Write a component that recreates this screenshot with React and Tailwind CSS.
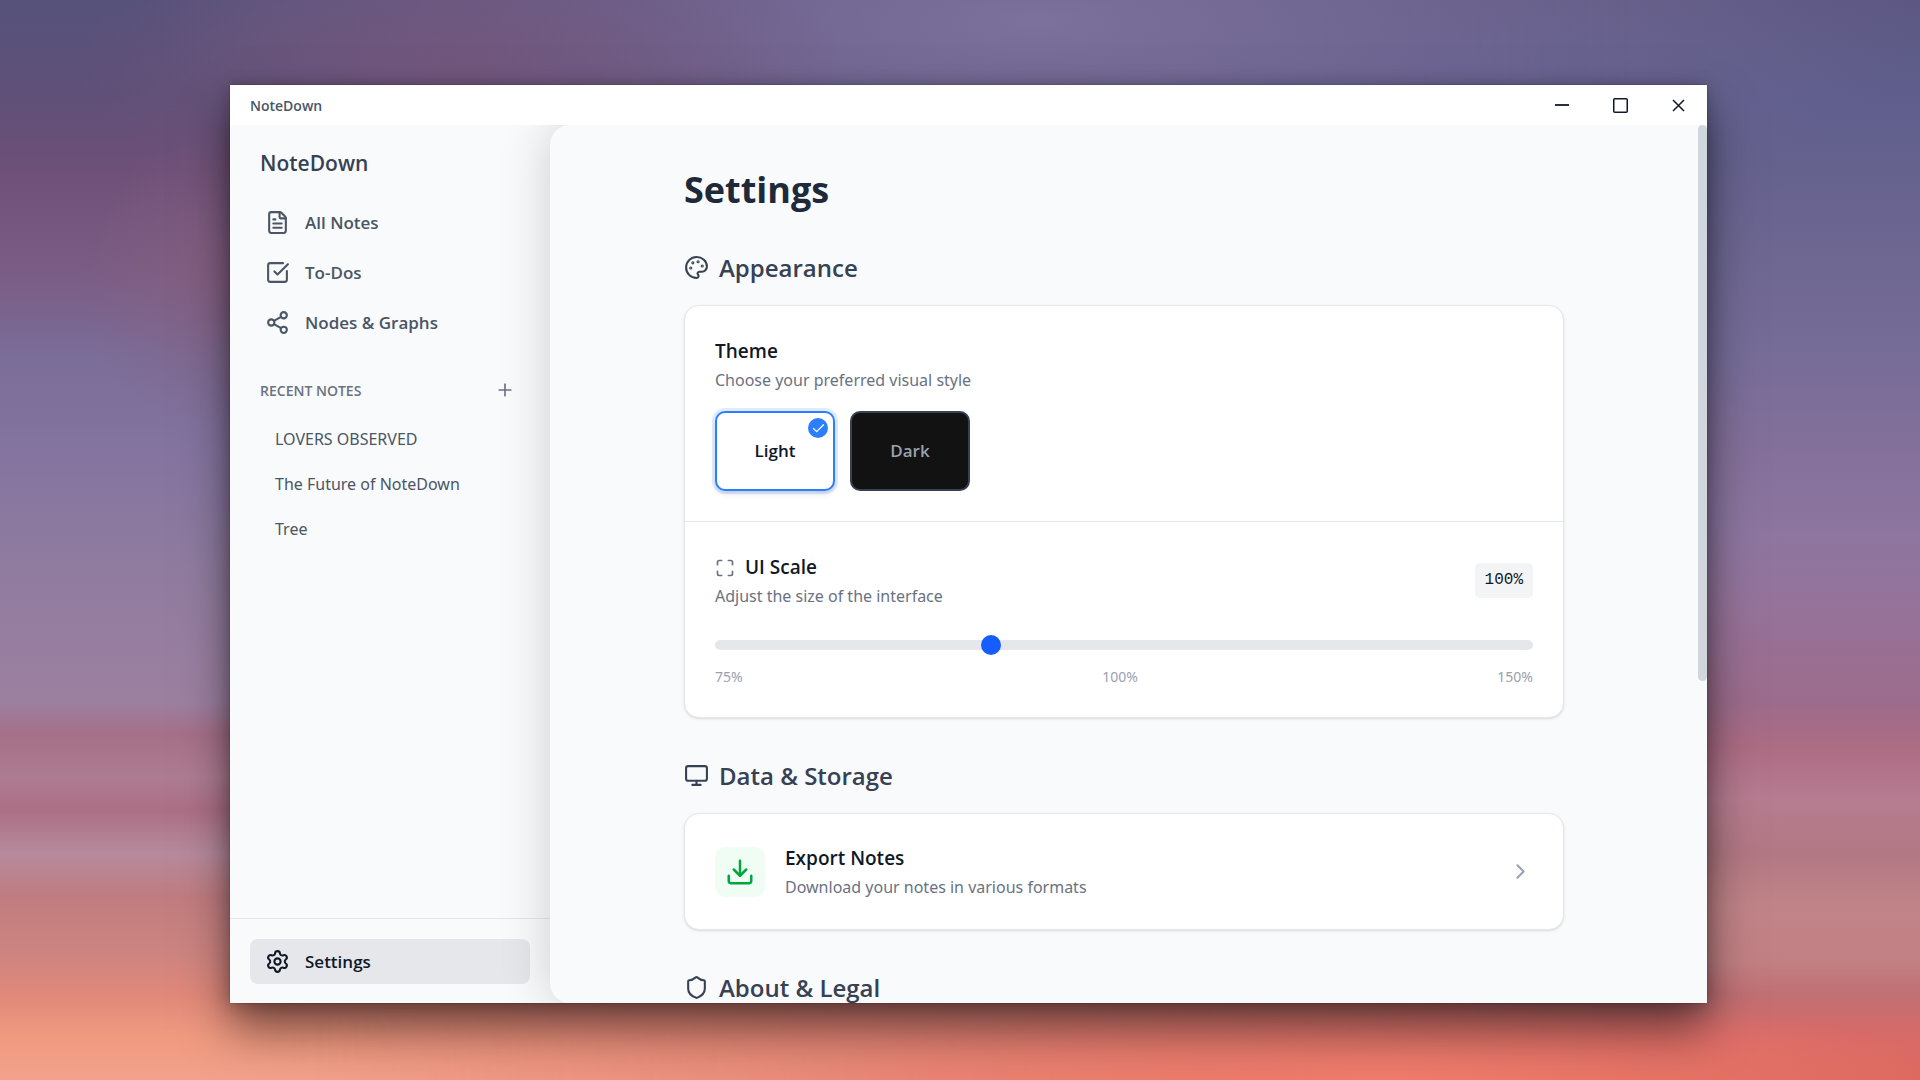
import { useState } from "react";
import {
  FileText, SquareCheckBig, Share2, Plus, Settings, Palette, Check,
  Maximize, Monitor, Download, ChevronRight, Shield,
} from "lucide-react";

const navItems = [
  { label: "All Notes", Icon: FileText },
  { label: "To-Dos", Icon: SquareCheckBig },
  { label: "Nodes & Graphs", Icon: Share2 },
];

const recentNotes = ["LOVERS OBSERVED", "The Future of NoteDown", "Tree"];

const strong = "font-['Open_Sans',sans-serif] font-semibold";

function TitleBar() {
  return (
    <header className="flex h-10 shrink-0 items-center justify-between bg-white pl-5">
      <span className={`${strong} text-[14px] text-[#4a5565]`}>NoteDown</span>
      <div className="flex h-full text-[#101828]">
        <button type="button" aria-label="Minimize" className="flex w-[58px] items-center justify-center">
          <svg width="14" height="14" viewBox="0 0 14 14" stroke="currentColor" strokeWidth="1.8"><path d="M0 7h14" /></svg>
        </button>
        <button type="button" aria-label="Maximize" className="flex w-[58px] items-center justify-center">
          <svg width="15" height="15" viewBox="0 0 15 15" fill="none" stroke="currentColor" strokeWidth="1.5"><rect x="0.75" y="0.75" width="13.5" height="13.5" rx="1" /></svg>
        </button>
        <button type="button" aria-label="Close" className="flex w-[58px] items-center justify-center">
          <svg width="15" height="15" viewBox="0 0 15 15" stroke="currentColor" strokeWidth="1.5"><path d="M2 2l11 11M13 2L2 13" /></svg>
        </button>
      </div>
    </header>
  );
}

function Sidebar() {
  return (
    <aside className="flex w-80 shrink-0 flex-col text-[#4a5565]">
      <h1 className={`${strong} px-[30px] pt-[21px] text-[21px] leading-[35px] text-[#364153]`}>NoteDown</h1>
      <nav className="flex flex-col gap-[5px] px-5 pt-[19px]">
        {navItems.map(({ label, Icon }) => (
          <button key={label} type="button" className={`${strong} flex h-[45px] items-center gap-[15px] rounded-lg px-[15px] text-[17px]`}>
            <Icon size={25} strokeWidth={2} />
            {label}
          </button>
        ))}
      </nav>
      <div className="flex items-center justify-between px-[30px] pt-[30px]">
        <h2 className={`${strong} text-[14px] leading-[25px] text-[#6a7282]`}>RECENT NOTES</h2>
        <button type="button" aria-label="New note" className="p-[5px] text-[#6a7282]"><Plus size={20} strokeWidth={2} /></button>
      </div>
      <ul className="flex flex-col px-5 pt-[11px]">
        {recentNotes.map((note) => (
          <li key={note}>
            <button type="button" className="h-[45px] w-full px-[25px] text-left text-[16px]">{note}</button>
          </li>
        ))}
      </ul>
      <div className="mt-auto border-t border-[#e5e7eb] px-5 pt-5 pb-[19px]">
        <button type="button" className={`${strong} flex h-[45px] w-full items-center gap-[15px] rounded-lg bg-[#e5e7eb] px-[15px] text-[17px] text-[#101828]`}>
          <Settings size={25} strokeWidth={2} />
          Settings
        </button>
      </div>
    </aside>
  );
}

function Section({ title, Icon, children }) {
  return (
    <section className="flex flex-col gap-5">
      <h2 className={`${strong} flex items-center gap-[10px] text-[24px] leading-[35px] text-[#364153]`}>
        <Icon size={25} strokeWidth={2} />
        {title}
      </h2>
      {children}
    </section>
  );
}

const cardClass = "w-full rounded-[15px] border border-[#e5e7eb] bg-white shadow-sm";

function RowText({ title, text, Icon }) {
  return (
    <div className="text-left">
      <h3 className={`${strong} flex items-center gap-[10px] text-[19px] leading-[31px] text-[#101828]`}>
        {Icon && <Icon size={20} strokeWidth={2} className="text-[#6a7282]" />}
        {title}
      </h3>
      <p className="text-[16px] leading-[26px] text-[#6a7282]">{text}</p>
    </div>
  );
}

function SelectedMark() {
  return (
    <span className="absolute top-[5px] right-[5px] flex size-5 items-center justify-center rounded-full bg-[#2b7fff] text-white">
      <Check size={15} strokeWidth={2} />
    </span>
  );
}

function Appearance() {
  const [theme, setTheme] = useState("Light");
  const [scale, setScale] = useState(100);
  return (
    <div className={cardClass}>
      <div className="border-b border-[#e5e7eb] p-[30px]">
        <RowText title="Theme" text="Choose your preferred visual style" />
        <div className="flex gap-[15px] pt-[18px]">
          <button type="button" onClick={() => setTheme("Light")} className={`${strong} relative h-20 w-[120px] rounded-[10px] border-2 border-[#2b7fff] bg-white text-[17px] text-[#101828] shadow-md ring-3 ring-[#2b7fff]/15`}>
            Light
            {theme === "Light" && <SelectedMark />}
          </button>
          <button type="button" onClick={() => setTheme("Dark")} className={`${strong} relative h-20 w-[120px] rounded-[10px] border-2 border-[#364153] bg-[#121212] text-[17px] text-[#99a1af]`}>
            Dark
            {theme === "Dark" && <SelectedMark />}
          </button>
        </div>
      </div>
      <div className="p-[30px]">
        <div className="flex items-center justify-between">
          <RowText title="UI Scale" text="Adjust the size of the interface" Icon={Maximize} />
          <output className="rounded-[5px] bg-[#f3f4f6] px-[10px] py-[5px] font-['Liberation_Mono',monospace] text-[16px] leading-[25px] text-[#101828]">{scale}%</output>
        </div>
        <input
          type="range" min="75" max="150" step="5" value={scale} aria-label="UI Scale"
          onChange={(e) => setScale(Number(e.target.value))}
          className="mt-[31px] block h-[10px] w-full cursor-pointer appearance-none rounded-lg bg-[#e5e7eb] [&::-webkit-slider-thumb]:size-5 [&::-webkit-slider-thumb]:appearance-none [&::-webkit-slider-thumb]:rounded-full [&::-webkit-slider-thumb]:bg-[#155dfc]"
        />
        <div className="flex justify-between pt-[17px] text-[14px] leading-5 text-[#99a1af]">
          <span>75%</span><span>100%</span><span>150%</span>
        </div>
      </div>
    </div>
  );
}

/* Sunset sky: a right-hand wash with a left-hand wash faded over it. */
function Wallpaper() {
  return (
    <div aria-hidden="true" className="absolute inset-0 bg-[linear-gradient(180deg,#5c5882,#5f5e8c_9%,#6a6590_20%,#766d98_33%,#84709a_42%,#8c76a0_49%,#95739a_56%,#9c6c8c_65%,#ac6c84_69%,#b67c90_74%,#b27884_79%,#c08488_84%,#c28084_89%,#c07074_92%,#d86a67_96%,#dc695f)]">
      <div className="absolute inset-0 bg-[linear-gradient(180deg,#56527a,#5f5078_9%,#6e5078_16%,#7a5c84_25%,#7a6d98_33%,#84749f_42%,#907c9f_53%,#9c80a0_65%,#a57088_68%,#ae7c92_72%,#ac6f85_75%,#b68a9c_79%,#c07c80_83%,#cc8480_88%,#e0887a_92%,#f09a80_96%,#f2a28c)] [mask-image:linear-gradient(90deg,#000_15%,transparent_85%)]" />
      <div className="absolute inset-0 bg-[radial-gradient(ellipse_20%_14%_at_24%_6%,#75557acc,transparent),radial-gradient(ellipse_46%_22%_at_54%_2%,#7c709c,transparent),radial-gradient(ellipse_8%_14%_at_12%_26%,#88607faa,transparent),radial-gradient(ellipse_30%_8%_at_72%_100%,#f07c6c,transparent)]" />
    </div>
  );
}

export default function App() {
  return (
    <div className="relative isolate flex h-screen overflow-hidden pt-[85px] pr-[213px] pb-[77px] pl-[230px] font-['Noto_Sans',sans-serif]">
      <Wallpaper />
      <div className="relative flex min-w-0 flex-1 flex-col bg-[#f9fafb] shadow-[0_26px_44px_rgba(0,0,0,0.5),0_2px_16px_rgba(0,0,0,0.25),0_0_1px_rgba(0,0,0,0.5)]">
        <TitleBar />
        <div className="flex min-h-0 flex-1 overflow-hidden">
          <Sidebar />
          <main className="flex min-w-0 flex-1 rounded-l-[20px] bg-[#f9fafb] shadow-[0_0_50px_rgba(0,0,0,0.18)]">
            <div className="min-w-0 flex-1 overflow-y-auto">
              <div className="mx-auto max-w-[960px] px-10 pt-10 pb-[246px]">
                <h1 className="pb-[35px] font-['Open_Sans',sans-serif] text-[36px] leading-[50px] font-bold text-[#1e2939]">Settings</h1>
                <div className="flex flex-col gap-10">
                  <Section title="Appearance" Icon={Palette}><Appearance /></Section>
                  <Section title="Data & Storage" Icon={Monitor}>
                    <button type="button" className={`${cardClass} flex items-center gap-5 px-[30px] py-[29px]`}>
                      <span className="flex size-[50px] items-center justify-center rounded-[10px] bg-[#f0fdf4] text-[#00a63e]"><Download size={30} strokeWidth={2} /></span>
                      <RowText title="Export Notes" text="Download your notes in various formats" />
                      <ChevronRight size={25} className="ml-auto text-[#99a1af]" />
                    </button>
                  </Section>
                  <Section title="About & Legal" Icon={Shield} />
                </div>
              </div>
            </div>
            <div aria-hidden="true" className="w-[9px] shrink-0">
              <div className="h-[63.3%] rounded-full bg-[#d1d5dc]" />
            </div>
          </main>
        </div>
      </div>
    </div>
  );
}
